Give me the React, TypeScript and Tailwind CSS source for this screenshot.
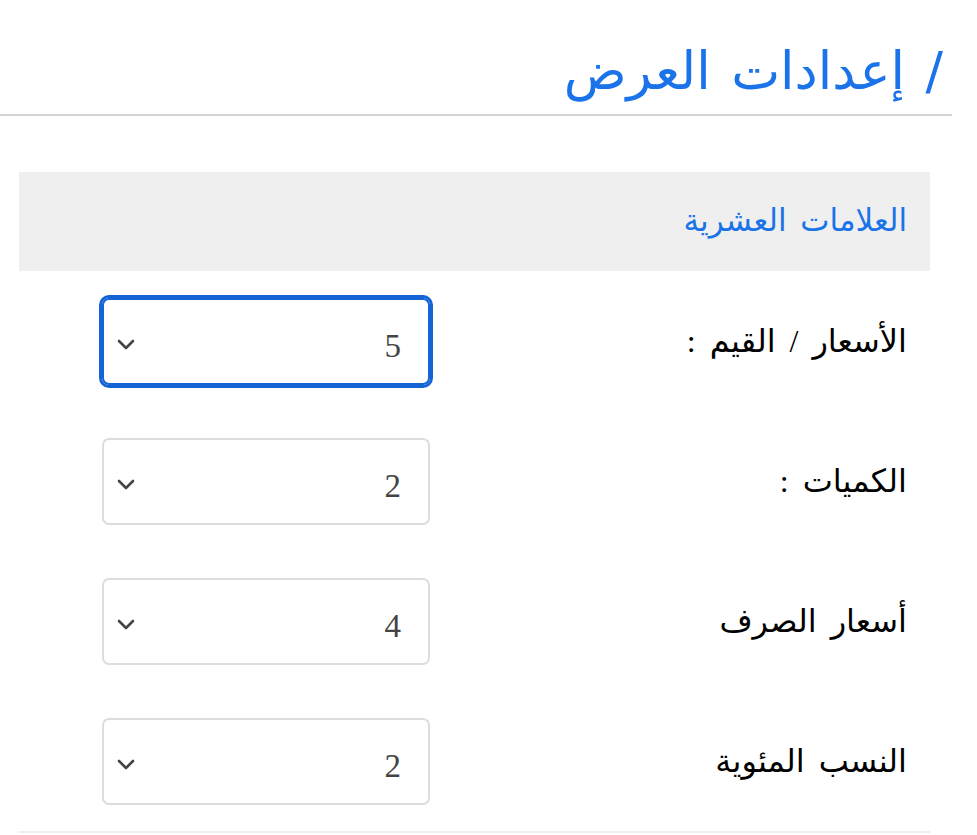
import React from "react";

const rows = [
  { label: "الأسعار / القيم :", value: "5", focused: true },
  { label: "الكميات :", value: "2", focused: false },
  { label: "أسعار الصرف", value: "4", focused: false },
  { label: "النسب المئوية", value: "2", focused: false },
];

function Chevron() {
  return (
    <svg width="18" height="12" viewBox="0 0 18 12" className="absolute left-[13px] top-[38px]" aria-hidden>
      <path d="M2 3l7 7 7-7" fill="none" stroke="#444" strokeWidth="2.6" strokeLinecap="round" strokeLinejoin="round" />
    </svg>
  );
}

export default function App() {
  return (
    <div dir="rtl" className="w-[952px] bg-white font-['Liberation_Serif','DejaVu_Sans',serif]">
      {/* Title */}
      <div className="h-[116px] border-b-2 border-[#d4d4d4] pr-[9px] pt-[38px]">
        <h1 className="text-[52px] leading-[66px] text-[#1a73e8] font-['DejaVu_Sans',sans-serif] [word-spacing:4px]">/ إعدادات العرض</h1>
      </div>

      <div className="pl-[19px] pr-[22px] pt-[56px]">
        {/* Section header */}
        <div className="h-[99px] bg-[#efefef] flex items-center pr-[23px]">
          <span className="text-[31px] text-[#1a73e8] [word-spacing:6px]">العلامات العشرية</span>
        </div>

        {/* Rows */}
        <div className="border-b-2 border-[#eeeeee]">
          {rows.map((r) => (
            <div key={r.label} className="h-[140px] flex items-center justify-between pr-[23px] pl-[83px]">
              <span className="text-[32px] text-black [word-spacing:6px]">{r.label}</span>
              <div
                className={
                  r.focused
                    ? "relative w-[328px] h-[87px] rounded-[7px] border-2 border-[#1564d6] outline-[3px] outline-solid outline-[#1564d6]"
                    : "relative w-[328px] h-[87px] rounded-[7px] border-2 border-[#dddddd]"
                }
              >
                <span className="absolute right-[27px] top-[24px] text-[33px] leading-[44px] text-[#444]">{r.value}</span>
                <Chevron />
              </div>
            </div>
          ))}
        </div>
      </div>
    </div>
  );
}
